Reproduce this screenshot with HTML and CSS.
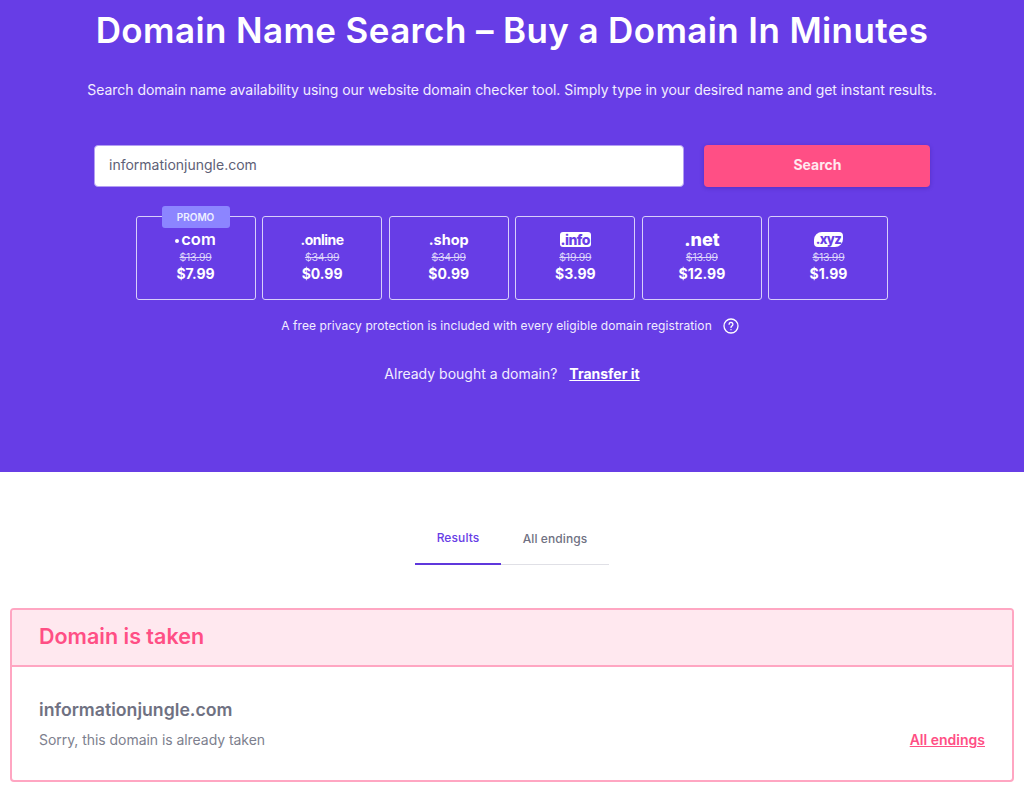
FILE: index.html
```html
<!DOCTYPE html>
<html lang="en">
<head>
<meta charset="utf-8">
<title>Domain Name Search</title>
<link rel="stylesheet" href="styles.css">
</head>
<body>
<section class="hero">
  <h1 class="hero-title">Domain Name Search – Buy a Domain In Minutes</h1>
  <p class="hero-sub">Search domain name availability using our website domain checker tool. Simply type in your desired name and get instant results.</p>
  <form class="search">
    <div class="search-input">informationjungle.com</div>
    <div class="search-btn">Search</div>
  </form>
  <div class="tlds">
    <div class="tld tld-promo">
      <span class="promo">PROMO</span>
      <span class="tld-name name-com"><i class="dot"></i>com</span>
      <s class="old">$13.99</s>
      <span class="price">$7.99</span>
    </div>
    <div class="tld">
      <span class="tld-name name-online">.online</span>
      <s class="old">$34.99</s>
      <span class="price">$0.99</span>
    </div>
    <div class="tld">
      <span class="tld-name name-shop">.shop</span>
      <s class="old">$34.99</s>
      <span class="price">$0.99</span>
    </div>
    <div class="tld">
      <span class="tld-name name-info"><span class="info-pill">.info</span></span>
      <s class="old">$19.99</s>
      <span class="price">$3.99</span>
    </div>
    <div class="tld">
      <span class="tld-name name-net">.net</span>
      <s class="old">$13.99</s>
      <span class="price">$12.99</span>
    </div>
    <div class="tld">
      <span class="tld-name name-xyz"><span class="xyz-pill">.xyz</span></span>
      <s class="old">$13.99</s>
      <span class="price">$1.99</span>
    </div>
  </div>
  <p class="privacy">A free privacy protection is included with every eligible domain registration
    <svg class="help" viewBox="0 0 16 16" width="16" height="16" fill="none" stroke="#fff" stroke-width="1.3" stroke-linecap="round"><circle cx="8" cy="8" r="7"/><path d="M6.1 6.3a1.9 1.9 0 1 1 2.9 1.6c-.7.4-1 .8-1 1.5"/><path d="M8 11.6v.1"/></svg>
  </p>
  <p class="transfer">Already bought a domain? <a class="transfer-link" href="#">Transfer it</a></p>
</section>
<section class="results">
  <nav class="tabs">
    <a class="tab tab-active" href="#">Results</a>
    <a class="tab" href="#">All endings</a>
  </nav>
  <div class="alert">
    <div class="alert-head">Domain is taken</div>
    <div class="alert-body">
      <div>
        <div class="alert-domain">informationjungle.com</div>
        <div class="alert-note">Sorry, this domain is already taken</div>
      </div>
      <a class="alert-link" href="#">All endings</a>
    </div>
  </div>
</section>
</body>
</html>
```
FILE: styles.css
```css
* { box-sizing: border-box; }
html, body { margin: 0; padding: 0; }
body { font-family: "Inter", "Liberation Sans", sans-serif; background: #fff; color: #6f7182; height: 792px; overflow: hidden; }

.hero { background: #673de6; height: 472px; color: #fff; display: flex; flex-direction: column; align-items: center; padding-top: 9px; }
.hero-title { margin: 0; font-size: 35px; line-height: 42px; font-weight: 600; letter-spacing: 0.38px; white-space: nowrap; }
.hero-sub { margin: 28px 0 0; font-size: 14px; line-height: 22px; color: #f2edff; white-space: nowrap; letter-spacing: -0.05px; }

.search { display: flex; gap: 20px; width: 836px; margin-top: 44px; }
.search-input { flex: 0 0 590px; height: 42px; background: #fff; border-radius: 4px; border: 1px solid #b39ef3; padding-left: 14px; font-size: 14px; line-height: 38px; color: #5e6076; }
.search-btn { flex: 1; height: 42px; background: #ff4f85; border-radius: 4px; color: #ffe8ef; font-size: 14px; font-weight: 700; line-height: 40px; padding-left: 1px; text-align: center; box-shadow: 0 1px 4px rgba(40, 20, 120, .3); }

.tlds { display: flex; gap: 6.6px; margin-top: 29px; }
.tld { position: relative; width: 120px; height: 84px; border: 1px solid #d8cffa; border-radius: 3px; display: flex; flex-direction: column; align-items: center; padding-top: 14px; }
.promo { position: absolute; top: -11px; left: 25px; width: 68px; height: 22px; background: #8c85ff; border-radius: 3px; font-size: 10px; font-weight: 600; line-height: 22px; text-align: center; color: #eef0ff; }
.tld-name { height: 17px; display: flex; align-items: center; justify-content: center; color: #fff; font-weight: 700; font-size: 14px; line-height: 17px; }
.name-com { font-size: 16.5px; font-weight: 600; gap: 2px; }
.dot { display: inline-block; width: 4px; height: 4px; border-radius: 50%; background: #fff; margin-top: 2px; }
.name-online { font-size: 14px; letter-spacing: -0.5px; font-weight: 700; }
.name-shop { font-size: 14.5px; font-weight: 700; }
.name-net { font-size: 18px; font-weight: 800; }
.info-pill { background: #fff; color: #673de6; border-radius: 3px; padding: 0 1px; font-size: 14px; line-height: 15px; font-weight: 800; letter-spacing: -0.5px; }
.xyz-pill { background: #fff; color: #673de6; border-radius: 8px 4px 8px 4px; padding: 0 2px; font-size: 13px; line-height: 15px; font-weight: 800; letter-spacing: -0.6px; }
.old { margin-top: 2px; font-size: 10.5px; line-height: 15px; color: #ddd5fa; letter-spacing: -0.2px; }
.price { font-size: 14px; font-weight: 700; line-height: 19px; color: #fff; margin-top: -1px; }

.privacy { margin: 18px 4px 0 0; height: 16px; font-size: 12px; line-height: 16px; color: #f2edff; display: flex; align-items: center; gap: 11px; letter-spacing: 0.09px; white-space: nowrap; }
.help { flex: none; }
.transfer { margin: 30px 0 0; font-size: 14px; line-height: 20px; color: #f2edff; }
.transfer-link { color: #fff; font-weight: 700; margin-left: 8px; text-decoration: underline; }

.results { padding: 0 10px; display: flex; flex-direction: column; align-items: center; }
.tabs { display: flex; width: 194px; margin-top: 49px; border-bottom: 1px solid #e0e0e6; height: 44px; }
.tab { height: 44px; display: flex; align-items: center; justify-content: center; padding-bottom: 9px; font-size: 12px; font-weight: 500; color: #6f7182; text-decoration: none; flex: 1 1 108px; letter-spacing: 0.1px; }
.tab-active { flex: 0 0 86px; color: #673de6; border-bottom: 2px solid #5f38dc; }

.alert { width: 100%; height: 174px; margin-top: 43px; border: 2px solid #ffa6c2; border-radius: 4px; overflow: hidden; }
.alert-head { height: 57px; background: #ffe8ef; border-bottom: 2px solid #ffa6c2; padding-left: 27px; font-size: 21.5px; font-weight: 600; line-height: 53px; color: #ff4f85; }
.alert-body { display: flex; justify-content: space-between; align-items: flex-end; padding: 31px 27px 0; }
.alert-domain { font-size: 17.7px; line-height: 24px; font-weight: 600; color: #6f7182; }
.alert-note { margin-top: 8px; font-size: 14px; line-height: 20px; color: #7d7f8e; letter-spacing: -0.05px; }
.alert-link { font-size: 14px; font-weight: 600; line-height: 20px; color: #ff4f85; text-decoration: underline; }
```
